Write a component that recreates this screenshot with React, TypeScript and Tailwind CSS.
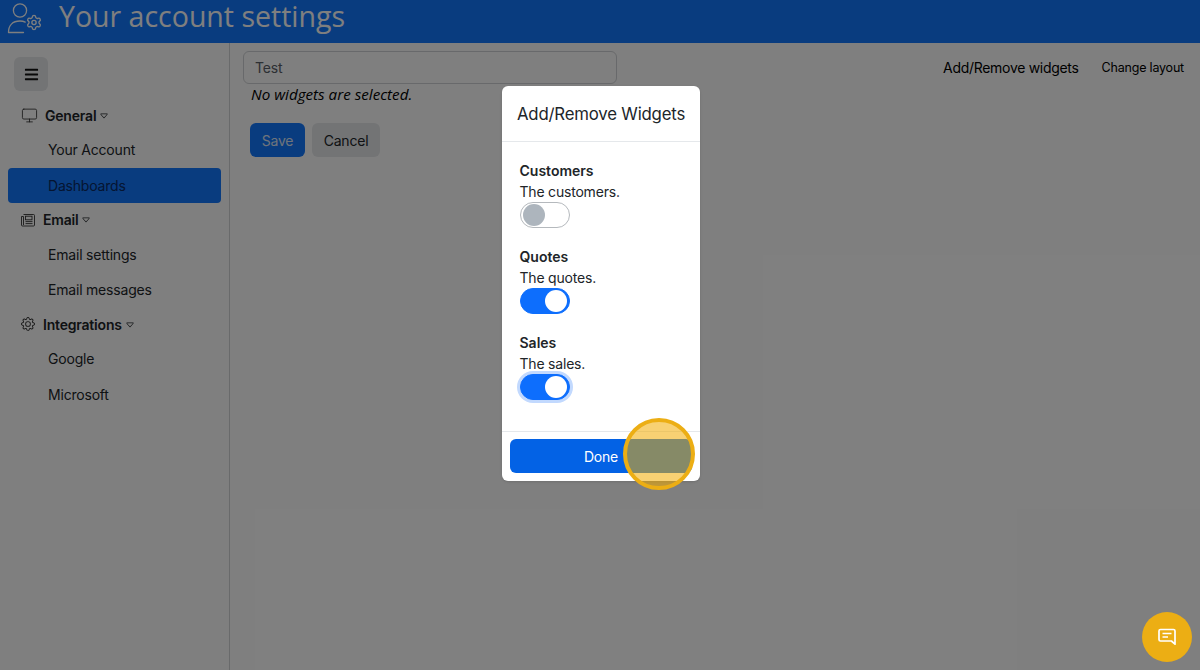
import { FaBars } from 'react-icons/fa';
import { BsCaretDown, BsGear } from 'react-icons/bs';
import { Monitor, Settings } from 'lucide-react';
import type { ReactNode } from 'react';

const nav: { label: string; icon: ReactNode; iconWidth: string; items: string[] }[] = [
  {
    label: 'General',
    icon: <Monitor className="w-[17px] h-[17px]" strokeWidth={1.2} />,
    iconWidth: 'w-[24px]',
    items: ['Your Account', 'Dashboards'],
  },
  {
    label: 'Email',
    icon: (
      <svg viewBox="0 0 14 14" className="w-[14px] h-[14px]" fill="none" stroke="currentColor" strokeWidth="0.9">
        <path d="M2.5 1.5h10a1 1 0 0 1 1 1v9.5a1 1 0 0 1-1 1H1.5a1 1 0 0 1-1-1V3.5h2V12" />
        <rect x="4.5" y="3.2" width="6.5" height="3.6" />
        <path d="M4.5 8.6h7M4.5 10.6h7" />
      </svg>
    ),
    iconWidth: 'w-[22px]',
    items: ['Email settings', 'Email messages'],
  },
  {
    label: 'Integrations',
    icon: <BsGear className="w-[14px] h-[14px]" />,
    iconWidth: 'w-[22px]',
    items: ['Google', 'Microsoft'],
  },
];

const widgets = [
  { name: 'Customers', text: 'The customers.', on: false, focus: false },
  { name: 'Quotes', text: 'The quotes.', on: true, focus: false },
  { name: 'Sales', text: 'The sales.', on: true, focus: true },
];

function Toggle({ on, focus }: { on: boolean; focus: boolean }) {
  return (
    <div
      className={`mt-[0.5px] w-[50px] h-[26px] rounded-full border flex items-center px-[2px] ${
        on ? 'bg-[#0d6efd] border-[#0d6efd] justify-end' : 'bg-white border-[#b5b9bd] justify-start'
      } ${focus ? 'ring-[3px] ring-[#c2d9fe]' : ''}`}
    >
      <div className={`w-[22px] h-[22px] rounded-full ${on ? 'bg-white' : 'bg-[#adb5bd]'}`} />
    </div>
  );
}

export default function App() {
  return (
    <div className="relative h-[670px] w-full overflow-hidden bg-white text-[14px] tracking-[-0.2px] text-[#212529] font-['Inter',sans-serif]">
      <header className="h-[43px] bg-[#1278ff] flex items-center pl-[7px] text-white">
        <svg viewBox="0 0 36 32" className="w-[36px] h-[32px] -mt-[6px] shrink-0" fill="none" stroke="currentColor" strokeWidth="1.3">
          <circle cx="13" cy="7.5" r="6.6" />
          <path d="M1.5 29.5c0-7 4-11.5 11.5-11.5 2 0 3.8.4 5.2 1.1M1.5 29.5h15" strokeLinecap="round" />
          <Settings x={18.5} y={11} width={17} height={17} strokeWidth={1.9} />
        </svg>
        <h1 className="ml-[16px] -mt-[12px] text-[28.5px] tracking-normal leading-[28px] font-['Open_Sans',sans-serif] whitespace-nowrap">
          Your account settings
        </h1>
      </header>

      <div className="flex h-[627px]">
        <aside className="w-[230px] shrink-0 border-r border-[#d2d4d6] px-[8px] pt-[14px]">
          <button className="ml-[6px] w-[34px] h-[34px] bg-[#e6e8eb] rounded-md flex items-center justify-center">
            <FaBars className="w-[15px] h-[15px] text-[#111]" />
          </button>
          <nav className="mt-[7.5px]">
            {nav.map((group) => (
              <div key={group.label}>
                <div className="h-[33.5px] flex items-center pl-[13px] font-semibold">
                  <span className={`${group.iconWidth} text-[#333]`}>{group.icon}</span>
                  <span>{group.label}</span>
                  <BsCaretDown className="ml-[3px] w-[10px] h-[10px] mt-[1px]" />
                </div>
                {group.items.map((item) => (
                  <div
                    key={item}
                    className={`h-[35.5px] flex items-center pl-[40px] rounded ${
                      item === 'Dashboards' ? 'bg-[#1278ff] text-[#0b2a63]' : ''
                    }`}
                  >
                    {item}
                  </div>
                ))}
              </div>
            ))}
          </nav>
        </aside>

        <main className="flex-1 flex items-start justify-between pl-[13px] pr-[16px] pt-[8px]">
          <div>
            <div className="w-[374px] h-[33px] border border-[#d0d3d6] rounded-md flex items-center pl-[11px] text-[#5a6068]">
              Test
            </div>
            <p className="ml-[8px] italic text-[15.2px] tracking-normal leading-[20px] font-['Open_Sans',sans-serif] text-black">
              No widgets are selected.
            </p>
            <div className="ml-[7px] mt-[19px] flex gap-[7px]">
              <button className="h-[34px] w-[55px] rounded-md bg-[#1278ff] text-[#dfe8f7]">Save</button>
              <button className="h-[34px] w-[68px] rounded-md bg-[#e6e8eb]">Cancel</button>
            </div>
          </div>
          <div className="flex items-center gap-[23px] h-[33px] text-black">
            <span className="tracking-[-0.3px]">Add/Remove widgets</span>
            <span className="text-[12.5px] mt-[2px]">Change layout</span>
          </div>
        </main>
      </div>

      {/* dim layer behind the dialog */}
      <div className="absolute inset-0 bg-black/50 flex justify-center pt-[86px] pl-[2px]">
        <div className="relative w-[198px] h-[395px] bg-white rounded-md flex flex-col shadow-sm">
          <div className="h-[56px] shrink-0 border-b border-[#e5e8eb] flex items-center justify-center pt-[3px] text-[16.8px] text-[#212529]">
            Add/Remove Widgets
          </div>
          <div className="flex-1 pl-[17.5px] pt-[17.5px] flex flex-col gap-[18px] leading-[21px]">
            {widgets.map((w) => (
              <div key={w.name} className="h-[68px]">
                <div className="font-semibold tracking-normal">{w.name}</div>
                <div>{w.text}</div>
                <Toggle on={w.on} focus={w.focus} />
              </div>
            ))}
          </div>
          <div className="h-[50px] shrink-0 border-t border-[#e5e8eb] px-[8px] pt-[7px]">
            <button className="w-full h-[34px] rounded-md bg-[#0362e5] text-white">Done</button>
          </div>
          {/* tutorial spotlight over the button */}
          <div className="absolute left-[121px] top-[332px] w-[72px] h-[72px] rounded-full border-[4px] border-[#ecae14] bg-[#f2ac00]/55" />
        </div>
      </div>

      <button className="absolute right-[8px] bottom-[8px] w-[50px] h-[50px] rounded-full bg-[#ecae14] flex items-center justify-center">
        <svg viewBox="0 0 20 20" className="w-[20px] h-[20px] text-white" fill="none" stroke="currentColor" strokeWidth="1.7">
          <path d="M3.5 2.5h13a1.5 1.5 0 0 1 1.5 1.5v13.2l-3.6-3.2H3.5A1.5 1.5 0 0 1 2 12.5V4a1.5 1.5 0 0 1 1.5-1.5z" strokeLinejoin="round" />
          <path d="M5.5 6.5h9M5.5 10h5.5" />
        </svg>
      </button>
    </div>
  );
}
